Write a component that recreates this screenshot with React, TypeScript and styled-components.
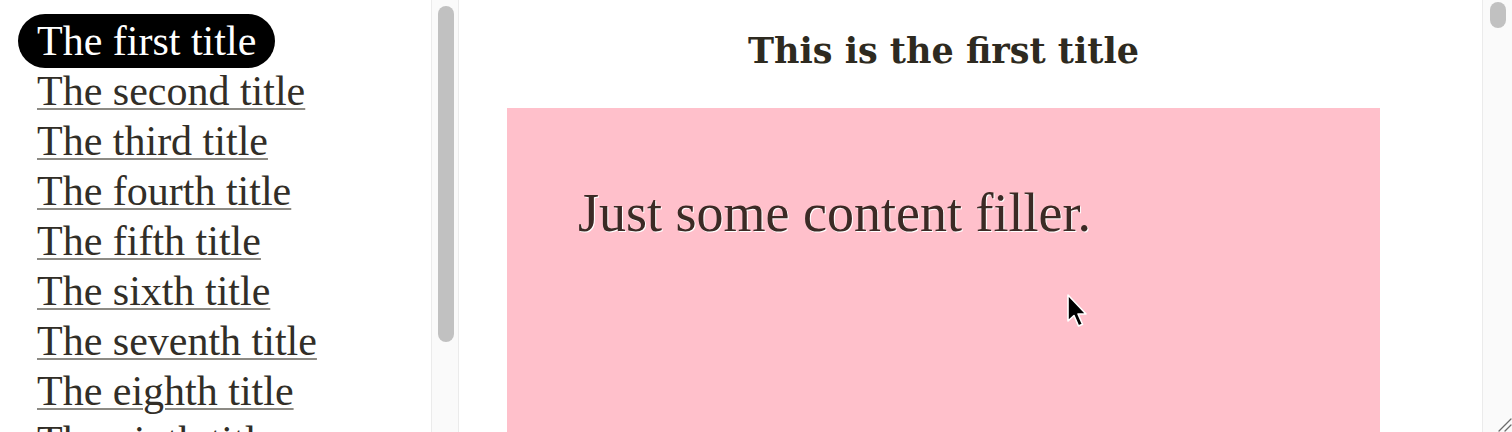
import React from "react";
import styled, { createGlobalStyle } from "styled-components";

const Global = createGlobalStyle`
  html, body { margin: 0; padding: 0; background: #fff; overflow: hidden; }
  #root { height: 100vh; }
`;

const Layout = styled.div`
  position: relative;
  display: flex;
  height: 100vh;
  font-family: "Liberation Serif", "Times New Roman", serif;
  color: #322e27;
`;

const Pane = styled.div<{ $width?: number }>`
  display: flex;
  height: 100%;
  flex: ${(p) => (p.$width ? `0 0 ${p.$width}px` : "1 1 auto")};
  min-width: 0;
`;

const ScrollArea = styled.div`
  flex: 1 1 auto;
  min-width: 0;
  height: 100%;
  overflow: hidden;
`;

const ScrollTrack = styled.div<{ $width: number; $right?: boolean }>`
  flex: 0 0 ${(p) => p.$width}px;
  box-sizing: border-box;
  height: 100%;
  display: flex;
  flex-direction: column;
  background: #fafafa;
  border-left: 1px solid #ebebeb;
  border-right: ${(p) => (p.$right ? "none" : "1px solid #ebebeb")};
`;

const Thumb = styled.div<{ $top: number; $left: number; $length: number }>`
  width: 16px;
  height: ${(p) => p.$length}px;
  margin: ${(p) => p.$top}px 0 0 ${(p) => p.$left}px;
  border-radius: 8px;
  background: #c1c1c1;
`;

const Grip = styled.svg`
  margin: auto 0 0 auto;
  display: block;
`;

const NavList = styled.ul`
  list-style: none;
  margin: 0;
  padding: 16px 0 20px 18px;
`;

const NavItem = styled.li`
  display: flex;
  align-items: center;
  height: 50px;
`;

const NavLink = styled.a<{ $active?: boolean }>`
  display: inline-flex;
  align-items: center;
  height: 54px;
  padding: 0 19px;
  box-sizing: border-box;
  border-radius: 27px;
  font-size: 42px;
  white-space: nowrap;
  cursor: pointer;
  color: ${(p) => (p.$active ? "#ffffff" : "#322e27")};
  background: ${(p) => (p.$active ? "#000000" : "transparent")};
  text-decoration: ${(p) => (p.$active ? "none" : "underline")};
  text-decoration-color: #8c8a84;
  text-decoration-thickness: 2px;
  text-underline-offset: 3px;
`;

const Article = styled.article`
  width: 873px;
  padding: 0 0 0 48px;
`;

const Heading = styled.h1`
  margin: 30px 0 37px;
  text-align: center;
  font-family: "DejaVu Serif", serif;
  font-weight: bold;
  font-size: 35px;
  line-height: 41px;
  color: #2e2a20;
  white-space: nowrap;
`;

const PinkBox = styled.section`
  background: #ffc0cb;
  height: 5900px;
  padding: 75px 71px;
`;

const Filler = styled.p`
  margin: 0;
  font-size: 54px;
  line-height: 61px;
  color: #3b2a25;
  text-shadow: 1px 1px 0 #ffffff;
`;

const Pointer = styled.svg`
  position: absolute;
  left: 1066px;
  top: 293px;
  pointer-events: none;
`;

const titles = [
  "The first title",
  "The second title",
  "The third title",
  "The fourth title",
  "The fifth title",
  "The sixth title",
  "The seventh title",
  "The eighth title",
  "The ninth title",
  "The tenth title",
];

export default function App() {
  return (
    <>
      <Global />
      <Layout>
        <Pane $width={459}>
          <ScrollArea>
            <NavList>
              {titles.map((t, i) => (
                <NavItem key={t}>
                  <NavLink $active={i === 0}>{t}</NavLink>
                </NavItem>
              ))}
            </NavList>
          </ScrollArea>
          <ScrollTrack $width={28}>
            <Thumb $top={6} $left={6} $length={336} />
          </ScrollTrack>
        </Pane>
        <Pane>
          <ScrollArea>
            <Article>
              <Heading>This is the first title</Heading>
              <PinkBox>
                <Filler>Just some content filler.</Filler>
              </PinkBox>
            </Article>
          </ScrollArea>
          <ScrollTrack $width={30} $right>
            <Thumb $top={2} $left={7} $length={26} />
            <Grip width="16" height="16" viewBox="0 0 16 16">
              <path d="M3 15 L15 3 M9 15 L15 9" stroke="#6b6b6b" strokeWidth="1.3" strokeLinecap="round" />
            </Grip>
          </ScrollTrack>
        </Pane>
        <Pointer width="22" height="36" viewBox="0 0 22 36">
          <path
            d="M2 2 L2 28 L8 22.5 L12.5 33 L16.5 31.2 L12 21 L20 21 Z"
            fill="#000"
            stroke="#fff"
            strokeWidth="1.6"
            strokeLinejoin="round"
          />
        </Pointer>
      </Layout>
    </>
  );
}
